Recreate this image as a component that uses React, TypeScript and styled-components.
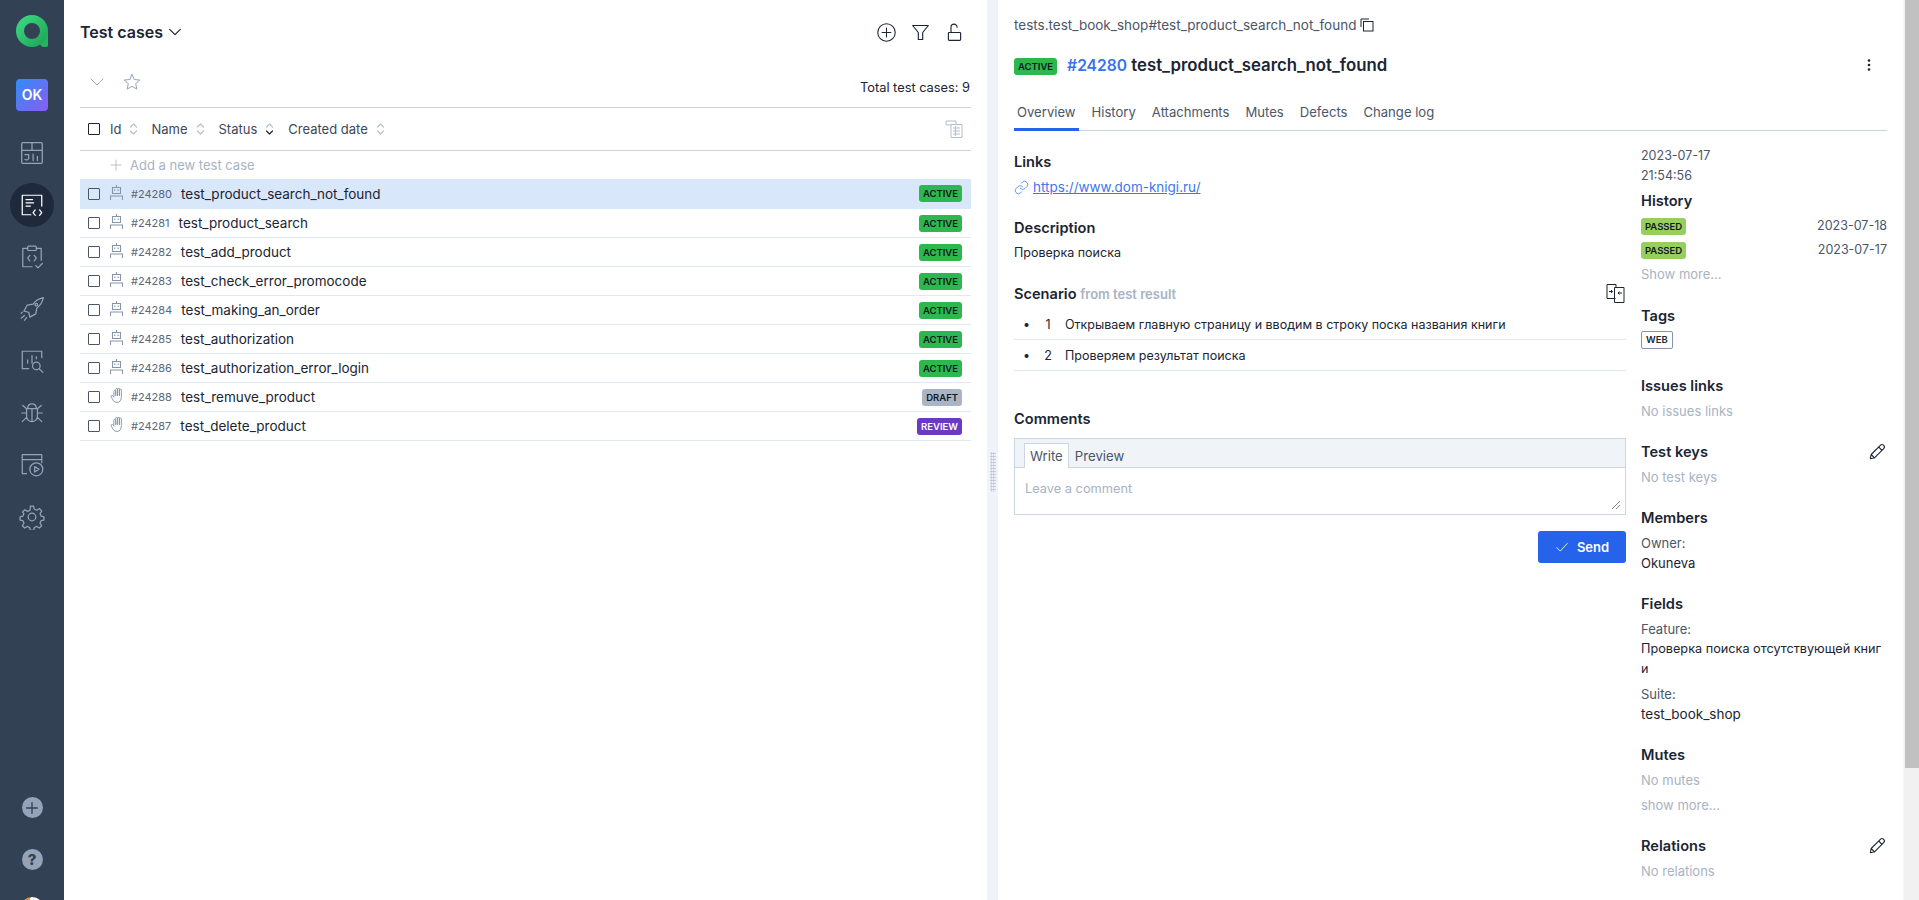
import React from 'react';
import styled, { createGlobalStyle } from 'styled-components';

const Global = createGlobalStyle`
    html, body { margin: 0; padding: 0; height: 100%; overflow: hidden; }
    body { font-family: Inter, "Noto Sans", sans-serif; font-size: 13px; line-height: 20px; color: #1b2533; background: #fff; }
    * { box-sizing: border-box; }
`

const Ico = ({ size = 24, sw = 1.5, children }: { size?: number, sw?: number, children: React.ReactNode }) => (
    <svg width={size} height={size} viewBox="0 0 24 24" fill="none" stroke="currentColor" strokeWidth={sw} strokeLinecap="round" strokeLinejoin="round">
        {children}
    </svg>
)

const Logo = () => (
    <svg width="32" height="32" viewBox="0 0 32 32" fill="none">
        <defs>
            <linearGradient id="lg" x1="0" y1="0" x2="1" y2="1">
                <stop offset="0" stopColor="#3ad680" />
                <stop offset="1" stopColor="#1fa858" />
            </linearGradient>
        </defs>
        <path d="M24 16v12c0 3 2 4 4 4h2c1.500 0 2-1 2-2V16z" fill="#22b45e" />
        <circle cx="16" cy="16" r="12" stroke="url(#lg)" strokeWidth="8" />
    </svg>
)

const navIcons: React.ReactNode[] = [
    <><rect x="2.500" y="2.500" width="19" height="19" rx="1" /><path d="M2.500 9.500h19M12 2.500v7M5.500 13.500h3.500v3.500a2.500 2.500 0 01-3.500 1M13 13v6M17 15v4" /></>,
    <><path d="M21 13V3H3v18h8" /><path d="M6.500 7h6M6.500 10h7M6.500 13h4" /><path d="M15 16.500L13 19l2 2.500M19 16.500l2 2.500-2 2.500" /></>,
    <><path d="M8 4H3.500v17H12M16 4h4.500v11" /><rect x="8" y="2" width="8" height="4" rx="1" /><path d="M10 10.500l-2 2.500 2 2.500M14 10.500l2 2.500-2 2.500M15.500 20l2 2 4-4" /></>,
    <><path d="M9 15l-4.500-1 3-5.500 5.500-1c2-3 5-5 9.500-6-1 4.500-3 7.500-6 9.500l-1 5.500-5.500 3-1-4.500z" /><path d="M5 18l-3 2.500M7 20l-2 2.500M3 15l-1 1" /><circle cx="16" cy="8" r="1.200" /></>,
    <><path d="M21 9V3H3v16h6" /><path d="M8 14v-3M12 14V7M16 10V8" /><circle cx="16" cy="16.500" r="3.500" /><path d="M18.500 19l3.500 3.500" /></>,
    <><path d="M8 8c0-6 8-6 8 0M7 8h10v7a5 5 0 01-10 0zM12 8v12M7 12H2.500M17 12h4.500M7 16l-4 4M17 16l4 4M7 8L3.500 5M17 8l3.500-3" /></>,
    <><path d="M3 13V2.500h18V10M3 7h18M3 13v7h4" /><circle cx="16" cy="16" r="6" /><path d="M14.500 13.500l4 2.500-4 2.500z" /></>,
    <><circle cx="12" cy="12" r="3.500" /><path d="M10.500 2h3l.6 2.800 2.300 1 2.500-1.500 2.100 2.100-1.500 2.500 1 2.300 2.500.6v3l-2.600.6-1 2.300 1.500 2.400-2.100 2.100-2.400-1.500-2.300 1-.6 2.700h-3l-.6-2.700-2.300-1-2.400 1.500-2.100-2.100 1.500-2.400-1-2.300-2.600-.6v-3l2.500-.6 1-2.300L3.300 7.400l2.100-2.100 2.500 1.500 2.300-1z" /></>,
]

type Case = { id: string, name: string, status: 'active' | 'draft' | 'review', manual?: boolean }

const cases: Case[] = [
    { id: '#24280', name: 'test_product_search_not_found', status: 'active' },
    { id: '#24281', name: 'test_product_search', status: 'active' },
    { id: '#24282', name: 'test_add_product', status: 'active' },
    { id: '#24283', name: 'test_check_error_promocode', status: 'active' },
    { id: '#24284', name: 'test_making_an_order', status: 'active' },
    { id: '#24285', name: 'test_authorization', status: 'active' },
    { id: '#24286', name: 'test_authorization_error_login', status: 'active' },
    { id: '#24288', name: 'test_remuve_product', status: 'draft', manual: true },
    { id: '#24287', name: 'test_delete_product', status: 'review', manual: true },
]

const SortArrows = ({ down }: { down?: boolean }) => (
    <SortIcon>
        <svg width="9" height="14" viewBox="0 0 9 14" fill="none" strokeWidth="1.2" strokeLinecap="round" strokeLinejoin="round">
            <path d="M1.500 5L4.500 2l3 3" stroke="#b4bfcd" />
            <path d="M1.500 9l3 3 3-3" stroke={down ? '#1b2533' : '#b4bfcd'} />
        </svg>
    </SortIcon>
)

const Robot = () => (
    <svg width="13" height="15" viewBox="0 0 13 15" fill="none" stroke="#8795aa" strokeWidth="1.1">
        <path d="M6.500 0v2M2.500 2.500h8v6h-8zM.5 15v-4h12v4" />
        <path d="M4.800 4.500v1.500M8.200 4.500v1.500" />
    </svg>
)

const Hand = () => (
    <svg width="13" height="15" viewBox="1 0.700 9.500 12.800" fill="none" stroke="#8795aa" strokeWidth="0.8" strokeLinecap="round">
        <path d="M3.500 8V3.500a.8.8 0 011.600 0V7M5.100 7V1.800a.8.8 0 011.600 0V7M6.700 7V1.600a.8.8 0 011.600 0V7M8.300 7V2.500a.8.8 0 011.600 0V8c0 3-1.200 5-3.700 5C3.500 13 2.500 11 1.200 8c-.4-1 .8-1.600 1.400-.7L3.500 8.500" />
    </svg>
)

const Pencil = () => (
    <EditBtn>
        <Ico size={20} sw={1.300}><path d="M4 20l1-5L16 4c1-1 3-1 4 0s1 3 0 4L9 19zM14 6l4 4M5 15l4 4" /></Ico>
    </EditBtn>
)

const App = () => {
    return <Page>
        <Global />
        <Sidebar>
            <LogoWrap><Logo /></LogoWrap>
            <Avatar>OK</Avatar>
            <Nav>
                {navIcons.map((icon, i) => (
                    <NavItem key={i} $active={i === 1}><Ico size={26} sw={1.150}>{icon}</Ico></NavItem>
                ))}
            </Nav>
            <SideBottom>
                <RoundBtn><Ico size={16} sw={2}><path d="M12 4v16M4 12h16" /></Ico></RoundBtn>
                <RoundBtn>?</RoundBtn>
                <UserPic />
            </SideBottom>
        </Sidebar>

        <LeftPane>
            <TopBar>
                <PageTitle>Test cases <Ico size={16} sw={1.800}><path d="M4 8l8 8 8-8" /></Ico></PageTitle>
                <TopActions>
                    <Ico size={21} sw={1.200}><circle cx="12" cy="12" r="10" /><path d="M12 7v10M7 12h10" /></Ico>
                    <Ico size={21} sw={1.300}><path d="M3 4h18l-6.500 8v8h-5v-8z" /></Ico>
                    <Ico size={21} sw={1.300}><rect x="5" y="12" width="14" height="9" rx="1" /><path d="M8 12V6a3.500 3.500 0 017 0" /></Ico>
                </TopActions>
            </TopBar>
            <FilterBar>
                <FilterIcons>
                    <Ico size={18} sw={1.200}><path d="M4 8l8 8 8-8" /></Ico>
                    <Ico size={20} sw={1.200}><path d="M12 3l2.800 6 6.500.7-4.900 4.300 1.400 6.500L12 17.200 6.200 20.500l1.400-6.500L2.700 9.700 9.200 9z" /></Ico>
                </FilterIcons>
                <Total>Total test cases: 9</Total>
            </FilterBar>
            <HeadRow>
                <Check $dark />
                <HeadCols>
                    <HeadCol>Id<SortArrows /></HeadCol>
                    <HeadCol>Name<SortArrows /></HeadCol>
                    <HeadCol>Status<SortArrows down /></HeadCol>
                    <HeadCol>Created date<SortArrows /></HeadCol>
                </HeadCols>
                <ColumnsIcon>
                    <svg width="18" height="18" viewBox="0 0 18 18" fill="none" stroke="#b4bfcd" strokeWidth="1">
                        <path d="M1 1h10v3M1 1v4h5" />
                        <path d="M6 4.500h11v13H6zM8 8h7M8 11h7M8 14h7M10.500 6v10" />
                    </svg>
                </ColumnsIcon>
            </HeadRow>
            <AddRow>
                <Ico size={12} sw={1.600}><path d="M12 2v20M2 12h20" /></Ico>
                <span>Add a new test case</span>
            </AddRow>
            {cases.map((c, i) => (
                <CaseRow key={c.id} $selected={i === 0}>
                    <Check />
                    <RowIcon>{c.manual ? <Hand /> : <Robot />}</RowIcon>
                    <CaseId>{c.id}</CaseId>
                    <CaseName>{c.name}</CaseName>
                    <Badge $status={c.status}>{c.status}</Badge>
                </CaseRow>
            ))}
        </LeftPane>

        <Splitter><Grip /></Splitter>

        <RightPane>
            <Path>
                tests.test_book_shop#test_product_search_not_found
                <CopyIcon>
                    <svg width="14" height="14" viewBox="0 0 14 14" fill="none" stroke="#1b2533" strokeWidth="1">
                        <path d="M1 9V1h8" /><rect x="3.500" y="3.500" width="9.500" height="9.500" />
                    </svg>
                </CopyIcon>
            </Path>
            <TitleRow>
                <BigBadge>ACTIVE</BigBadge>
                <BigTitle><IdLink>#24280</IdLink> test_product_search_not_found</BigTitle>
                <svg width="4" height="14" viewBox="0 0 4 14" fill="#1b2533">
                    <circle cx="2" cy="2.500" r="1.300" /><circle cx="2" cy="7" r="1.300" /><circle cx="2" cy="11.500" r="1.300" />
                </svg>
            </TitleRow>
            <Tabs>
                <Tab $active>Overview</Tab>
                <Tab>History</Tab>
                <Tab>Attachments</Tab>
                <Tab>Mutes</Tab>
                <Tab>Defects</Tab>
                <Tab>Change log</Tab>
            </Tabs>
            <Columns>
                <Main>
                    <Section>
                        <H3>Links</H3>
                        <LinkRow>
                            <Ico size={15} sw={1.500}>
                                <path d="M10 13a5 5 0 007.540.54l3-3a5 5 0 00-7.070-7.070l-1.720 1.710" />
                                <path d="M14 11a5 5 0 00-7.540-.54l-3 3a5 5 0 007.070 7.070l1.710-1.710" />
                            </Ico>
                            <LinkText>https://www.dom-knigi.ru/</LinkText>
                        </LinkRow>
                    </Section>
                    <Section>
                        <H3>Description</H3>
                        <Plain>Проверка поиска</Plain>
                    </Section>
                    <ScenarioHead>
                        <H3>Scenario <SubTitle>from test result</SubTitle></H3>
                        <ScenarioIcon>
                            <svg width="19" height="19" viewBox="0 0 19 19" fill="none" stroke="#1b2533" strokeWidth="1">
                                <path d="M9.500 14.500H1V.5h9v3" /><path d="M8.500 3.500h9.500v15H8.500z" /><path d="M3 7.500h3.500M5 6l1.500 1.500L5 9M16 9h-4M13.500 7.500L12 9l1.500 1.500" />
                            </svg>
                        </ScenarioIcon>
                    </ScenarioHead>
                    <Steps>
                        <Step><Bullet>•</Bullet><StepNo>1</StepNo>Открываем главную страницу и вводим в строку поска названия книги</Step>
                        <Step><Bullet>•</Bullet><StepNo>2</StepNo>Проверяем результат поиска</Step>
                    </Steps>
                    <CommentsTitle>Comments</CommentsTitle>
                    <CommentBox>
                        <CommentTabs>
                            <CommentTab $active>Write</CommentTab>
                            <CommentTab>Preview</CommentTab>
                        </CommentTabs>
                        <CommentArea>
                            Leave a comment
                            <Resize>
                                <svg width="8" height="8" viewBox="0 0 8 8" stroke="#667" strokeWidth="0.8"><path d="M0 8l8-8M4 8l4-4" /></svg>
                            </Resize>
                        </CommentArea>
                    </CommentBox>
                    <SendRow>
                        <SendBtn>
                            <Ico size={14} sw={1.500}><path d="M3 13l6 6L21 6" /></Ico>
                            Send
                        </SendBtn>
                    </SendRow>
                </Main>
                <Side>
                    <DateBlock>2023-07-17<br />21:54:56</DateBlock>
                    <SideSection>
                        <HistoryTitle>History</HistoryTitle>
                        <HistoryRow><Passed>PASSED</Passed><span>2023-07-18</span></HistoryRow>
                        <HistoryRow><Passed>PASSED</Passed><span>2023-07-17</span></HistoryRow>
                        <ShowMore>Show more...</ShowMore>
                    </SideSection>
                    <SideSection>
                        <H3>Tags</H3>
                        <Tag>WEB</Tag>
                    </SideSection>
                    <SideSection>
                        <H3>Issues links</H3>
                        <Muted>No issues links</Muted>
                    </SideSection>
                    <SideSection>
                        <HeadWithEdit><H3>Test keys</H3><Pencil /></HeadWithEdit>
                        <Muted>No test keys</Muted>
                    </SideSection>
                    <SideSection>
                        <H3>Members</H3>
                        <Label>Owner:</Label>
                        <Owner>Okuneva</Owner>
                    </SideSection>
                    <SideSection>
                        <H3>Fields</H3>
                        <Label>Feature:</Label>
                        <Value>Проверка поиска отсутствующей книги</Value>
                        <Label>Suite:</Label>
                        <Suite>test_book_shop</Suite>
                    </SideSection>
                    <SideSection>
                        <H3>Mutes</H3>
                        <Muted>No mutes</Muted>
                        <ShowMore $gap>show more...</ShowMore>
                    </SideSection>
                    <SideSection>
                        <HeadWithEdit><H3>Relations</H3><Pencil /></HeadWithEdit>
                        <Muted>No relations</Muted>
                    </SideSection>
                </Side>
            </Columns>
        </RightPane>

        <ScrollTrack><ScrollThumb /></ScrollTrack>
    </Page>
}

export default App

const Page = styled.div`
    display: flex;
    height: 900px;
    width: 1919px;
    overflow: hidden;
`
const Sidebar = styled.aside`
    width: 64px;
    flex: none;
    background: #334155;
    color: #94a3b8;
    display: flex;
    flex-direction: column;
    align-items: center;
    padding-top: 15px;
`
const LogoWrap = styled.div`
    width: 32px;
    height: 32px;
`
const Avatar = styled.div`
    margin-top: 32px;
    width: 32px;
    height: 32px;
    border-radius: 4px;
    background: linear-gradient(135deg, #2f8df5, #8b5cf6);
    color: #fff;
    font-weight: 600;
    font-size: 14px;
    display: flex;
    align-items: center;
    justify-content: center;
`
const Nav = styled.nav`
    margin-top: 20px;
    display: flex;
    flex-direction: column;
    align-items: center;
    gap: 8px;
`
const NavItem = styled.div<{ $active?: boolean }>`
    width: 44px;
    height: 44px;
    border-radius: 50%;
    display: flex;
    align-items: center;
    justify-content: center;
    background: ${p => p.$active ? '#1e293b' : 'transparent'};
    color: ${p => p.$active ? '#fff' : '#94a3b8'};
`
const SideBottom = styled.div`
    margin-top: auto;
    display: flex;
    flex-direction: column;
    align-items: center;
    height: 103px;
    flex: none;
    gap: 31px;
`
const RoundBtn = styled.div`
    width: 21px;
    height: 21px;
    flex: none;
    border-radius: 50%;
    background: #94a3b8;
    color: #334155;
    font-weight: 800;
    font-size: 15px;
    display: flex;
    align-items: center;
    justify-content: center;
`
const UserPic = styled.div`
    width: 24px;
    height: 24px;
    flex: none;
    margin-top: -4px;
    border-radius: 50%;
    background: linear-gradient(100deg, #e8913c 0 38%, #fff 38%);
`
const LeftPane = styled.section`
    width: 923px;
    flex: none;
    padding: 0 16px;
`
const TopBar = styled.div`
    height: 64px;
    display: flex;
    align-items: center;
    justify-content: space-between;
`
const PageTitle = styled.h1`
    margin: 0;
    font-size: 16px;
    font-weight: 600;
    display: flex;
    align-items: center;
    gap: 4px;
`
const TopActions = styled.div`
    display: flex;
    gap: 13px;
    margin-right: 6px;
    color: #1b2533;
`
const FilterBar = styled.div`
    height: 44px;
    display: flex;
    align-items: center;
    justify-content: space-between;
    border-bottom: 1px solid #ccd3dc;
`
const FilterIcons = styled.div`
    display: flex;
    align-items: center;
    gap: 16px;
    padding: 0 0 8px 8px;
    color: #94a3b8;
`
const Total = styled.div`
    font-size: 12.800px;
    padding: 4px 1px 0 0;
`
const HeadRow = styled.div`
    height: 43px;
    display: flex;
    align-items: center;
    padding-left: 8px;
    border-bottom: 1px solid #ccd3dc;
`
const Check = styled.span<{ $dark?: boolean }>`
    width: 12px;
    height: 12px;
    flex: none;
    border: 1px solid ${p => p.$dark ? '#1b2533' : '#4b5668'};
    border-radius: 1px;
`
const HeadCols = styled.div`
    display: flex;
    gap: 14px;
    margin-left: 10px;
    flex: 1;
`
const HeadCol = styled.div`
    display: flex;
    align-items: center;
    gap: 8px;
    font-size: 13px;
    color: #3c4758;
    &:first-child { margin-right: -1px; }
`
const SortIcon = styled.span`
    display: flex;
    width: 9px;
`
const ColumnsIcon = styled.span`
    display: flex;
    margin-right: 8px;
`
const AddRow = styled.div`
    height: 28px;
    display: flex;
    align-items: center;
    gap: 8px;
    padding-left: 30px;
    color: #a8b3c3;
    font-size: 13px;
`
const CaseRow = styled.div<{ $selected?: boolean }>`
    height: ${p => p.$selected ? '30px' : '29px'};
    display: flex;
    align-items: center;
    padding: 0 9px 0 8px;
    background: ${p => p.$selected ? '#d9e7fb' : 'transparent'};
    border-bottom: 1px solid ${p => p.$selected ? '#d9e7fb' : '#e2e8f0'};
`
const RowIcon = styled.span`
    display: flex;
    width: 14px;
    margin: -3px 0 0 10px;
`
const CaseId = styled.span`
    margin-left: 7px;
    font-size: 11px;
    color: #5b6678;
`
const CaseName = styled.span`
    margin-left: 9px;
    font-size: 13.500px;
    flex: 1;
`
const Badge = styled.span<{ $status: string }>`
    height: 17px;
    padding: 0 4px;
    border-radius: 3px;
    font-size: 9.500px;
    font-weight: 600;
    line-height: 17px;
    text-transform: uppercase;
    background: ${p => p.$status === 'active' ? '#2cb84e' : p.$status === 'draft' ? '#a9b5c4' : '#6b39c3'};
    color: ${p => p.$status === 'review' ? '#fff' : '#10171f'};
`
const Splitter = styled.div`
    width: 11px;
    flex: none;
    background: #f0f3f8;
    display: flex;
    align-items: center;
    justify-content: center;
`
const Grip = styled.div`
    width: 6px;
    height: 40px;
    margin-top: 44px;
    background-image: radial-gradient(#c4ccd8 1px, transparent 1px);
    background-size: 2.500px 3px;
`
const RightPane = styled.section`
    flex: 1;
    min-width: 0;
    padding: 15px 0 0 16px;
`
const Path = styled.div`
    display: flex;
    align-items: center;
    gap: 4px;
    font-size: 13.500px;
    color: #4b5668;
`
const CopyIcon = styled.span`
    display: flex;
`
const TitleRow = styled.div`
    margin-top: 19px;
    height: 22px;
    display: flex;
    align-items: center;
    padding-right: 32px;
`
const BigBadge = styled.span`
    height: 17px;
    padding: 0 4px;
    border-radius: 3px;
    margin-top: 3px;
    font-size: 9.500px;
    font-weight: 600;
    line-height: 17px;
    background: #2cb84e;
    color: #10171f;
`
const BigTitle = styled.h2`
    margin: 0 0 0 10px;
    font-size: 16.800px;
    font-weight: 600;
    flex: 1;
`
const IdLink = styled.span`
    color: #3a71ee;
    font-size: 15.600px;
`
const Tabs = styled.div`
    margin: 24px 16px 0 0;
    height: 31px;
    display: flex;
    border-bottom: 1px solid #ccd3dc;
`
const Tab = styled.div<{ $active?: boolean }>`
    height: 31px;
    padding: 0 3px;
    margin-right: 10px;
    font-size: 13.100px;
    line-height: 25px;
    color: #4b5668;
    border-bottom: 3px solid ${p => p.$active ? '#2563eb' : 'transparent'};
`
const Columns = styled.div`
    display: flex;
    padding-right: 16px;
`
const Main = styled.div`
    width: 612px;
    flex: none;
    padding-top: 21px;
`
const Section = styled.div`
    margin-bottom: 21px;
`
const H3 = styled.h3`
    margin: 0 0 5px;
    font-size: 14.600px;
    line-height: 20px;
    font-weight: 600;
`
const LinkRow = styled.div`
    display: flex;
    align-items: center;
    gap: 4px;
    color: #5b8ef0;
`
const LinkText = styled.a`
    font-size: 13.500px;
    text-decoration: underline;
    color: #3f76ee;
`
const Plain = styled.div`
    font-size: 12.500px;
`
const Muted = styled.div`
    color: #a8b3c3;
    font-size: 13px;
`
const SubTitle = styled.span`
    color: #a8b3c3;
    font-size: 13px;
`
const ScenarioHead = styled.div`
    display: flex;
    justify-content: space-between;
    align-items: flex-start;
    margin-top: 21px;
`
const ScenarioIcon = styled.span`
    display: flex;
    margin-right: 1px;
`
const Steps = styled.div``
const Step = styled.div`
    height: 31px;
    padding-top: 2px;
    display: flex;
    align-items: center;
    font-size: 12.500px;
    border-bottom: 1px solid #e2e8f0;
`
const Bullet = styled.span`
    width: 24px;
    padding-left: 9px;
    flex: none;
`
const StepNo = styled.span`
    width: 20px;
    margin-right: 7px;
    text-align: center;
    flex: none;
`
const CommentsTitle = styled(H3)`
    margin: 38px 0 9px;
`
const CommentBox = styled.div`
    height: 77px;
    border: 1px solid #ccd7e6;
`
const CommentTabs = styled.div`
    height: 29px;
    padding: 4px 0 0 9px;
    display: flex;
    background: #f0f3f8;
    border-bottom: 1px solid #ccd7e6;
`
const CommentTab = styled.div<{ $active?: boolean }>`
    height: ${p => p.$active ? '25px' : '24px'};
    padding: 0 5px;
    font-size: 13.200px;
    line-height: 24px;
    color: #4b5668;
    background: ${p => p.$active ? '#fff' : 'transparent'};
    border: 1px solid ${p => p.$active ? '#ccd7e6' : 'transparent'};
    border-bottom: none;
`
const CommentArea = styled.div`
    position: relative;
    height: 46px;
    padding: 11px 10px;
    font-size: 12.800px;
    color: #a8b3c3;
`
const Resize = styled.span`
    position: absolute;
    right: 5px;
    bottom: 5px;
    display: flex;
`
const SendRow = styled.div`
    display: flex;
    justify-content: flex-end;
    margin-top: 16px;
`
const SendBtn = styled.button`
    width: 88px;
    height: 32px;
    border: none;
    border-radius: 3px;
    background: #2563eb;
    color: #fff;
    font: 600 13px Inter, sans-serif;
    display: flex;
    align-items: center;
    justify-content: center;
    gap: 8px;
`
const Side = styled.div`
    margin-left: 15px;
    flex: 1;
    padding-top: 15px;
`
const DateBlock = styled.div`
    font-size: 12.500px;
    color: #4b5668;
    margin-bottom: 5px;
`
const SideSection = styled.div`
    margin-bottom: 21px;
`
const HistoryTitle = styled(H3)`
    margin-bottom: 3px;
`
const HistoryRow = styled.div`
    height: 24px;
    display: flex;
    justify-content: space-between;
    align-items: center;
    font-size: 12.500px;
    color: #4b5668;
`
const Passed = styled.span`
    height: 17px;
    padding: 0 4px;
    border-radius: 3px;
    background: #97cf5f;
    color: #10171f;
    font-size: 9.500px;
    font-weight: 600;
    line-height: 17px;
`
const Tag = styled.div`
    width: fit-content;
    height: 18px;
    margin-bottom: 27px;
    padding: 0 4px;
    border: 1px solid #8594a8;
    border-radius: 2px;
    font-size: 9.500px;
    font-weight: 600;
    line-height: 16px;
`
const HeadWithEdit = styled.div`
    display: flex;
    justify-content: space-between;
`
const EditBtn = styled.span`
    display: flex;
`
const Label = styled.div`
    font-size: 13px;
    color: #4b5668;
`
const Owner = styled.div`
    font-size: 13px;
`
const Value = styled.div`
    font-size: 12.700px;
    word-break: break-all;
    margin-bottom: 5px;
`
const Suite = styled.div`
    font-size: 13.500px;
`
const ShowMore = styled(Muted)<{ $gap?: boolean }>`
    margin-top: ${p => p.$gap ? '5px' : '2px'};
    margin-bottom: ${p => p.$gap ? '0' : '22px'};
`
const ScrollTrack = styled.div`
    width: 16px;
    flex: none;
    background: #f1f1f1;
    border-left: 1px solid #f7f7f7;
`
const ScrollThumb = styled.div`
    width: 14px;
    margin-left: 1px;
    height: 768px;
    background: #c1c1c1;
`
